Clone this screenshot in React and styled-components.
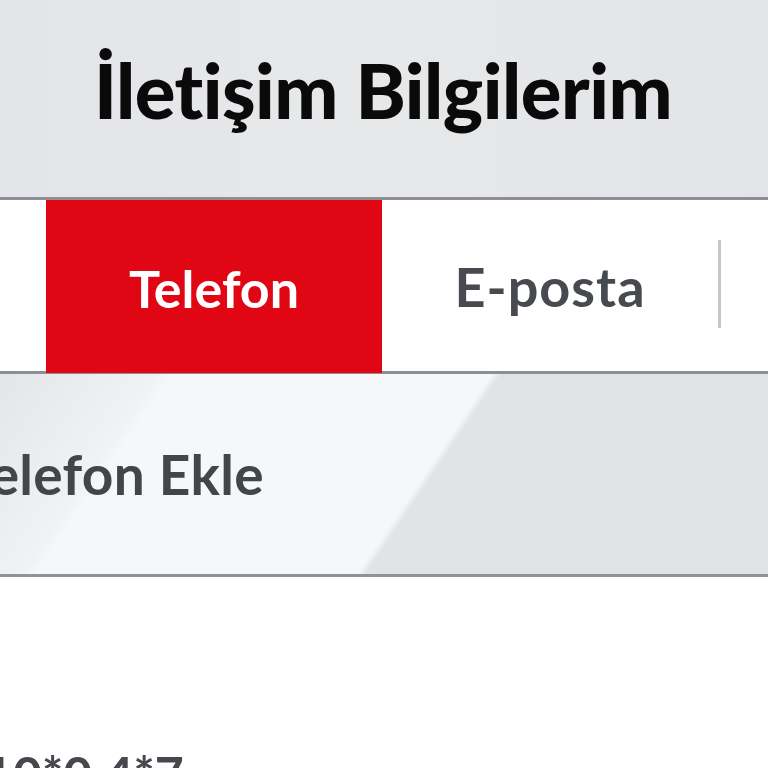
import React from "react";
import styled, { createGlobalStyle } from "styled-components";

const Global = createGlobalStyle`
  html, body {
    margin: 0;
    padding: 0;
    background: #fff;
    overflow: hidden;
  }
  body {
    font-family: Lato, "Open Sans", sans-serif;
  }
`;

const Page = styled.div`
  width: 768px;
  height: 768px;
  overflow: hidden;
  display: flex;
  flex-direction: column;
  background: #fff;
`;

const Header = styled.header`
  height: 197px;
  flex-shrink: 0;
  background: linear-gradient(90deg, #e3e5e8 0%, #e6e8ea 50%, #e2e4e7 100%);
  display: flex;
  align-items: center;
  justify-content: center;
`;

const Title = styled.h1`
  margin: 0;
  padding-bottom: 18px;
  padding-right: 2px;
  font-family: Lato, sans-serif;
  font-weight: 900;
  font-size: 76px;
  letter-spacing: -0.5px;
  color: #0a0a0a;
`;

const TabBar = styled.nav`
  height: 171px;
  flex-shrink: 0;
  border-top: 3px solid #8c8f93;
  border-bottom: 3px solid #8c8f93;
  background: #fff;
  display: flex;
  align-items: stretch;
  padding-left: 46px;
`;

const Tab = styled.div`
  width: 336px;
  display: flex;
  align-items: center;
  justify-content: center;
  padding-top: 2px;
  font-family: Lato, sans-serif;
  font-weight: 700;
  font-size: ${p => (p.$active ? "52px" : "54px")};
  letter-spacing: ${p => (p.$active ? "0" : "1px")};
  background: ${p => (p.$active ? "#e10613" : "transparent")};
  color: ${p => (p.$active ? "#fff" : "#474a4e")};
  margin-bottom: ${p => (p.$active ? "-2px" : "0")};
`;

const Divider = styled.span`
  align-self: center;
  width: 3px;
  height: 88px;
  margin-top: -4px;
  background: #c4c6c9;
`;

const AddSection = styled.section`
  height: 200px;
  flex-shrink: 0;
  border-bottom: 3px solid #8f9296;
  background: linear-gradient(
    124deg,
    #e3e5e8 0%,
    #eceef0 12%,
    #f1f2f4 17.5%,
    #f6f7f8 19%,
    #f6f7f8 54.5%,
    #e1e3e6 55.5%,
    #e1e3e6 100%
  );
  display: flex;
  align-items: center;
  overflow: hidden;
`;

const AddLabel = styled.div`
  margin-left: -37px;
  font-family: Lato, sans-serif;
  font-weight: 700;
  font-size: 55px;
  letter-spacing: 0.3px;
  color: #424549;
  white-space: nowrap;
`;

const NumberList = styled.div`
  flex: 1;
  display: flex;
  flex-direction: column;
  padding-top: 172px;
  overflow: hidden;
`;

const NumberRow = styled.div`
  margin-left: -16px;
  font-family: Lato, sans-serif;
  font-weight: 700;
  font-size: 50px;
  line-height: 50px;
  color: #45484c;
  white-space: nowrap;
`;

export default function App() {
  return (
    <Page>
      <Global />
      <Header>
        <Title>İletişim Bilgilerim</Title>
      </Header>
      <TabBar>
        <Tab $active>Telefon</Tab>
        <Tab>E-posta</Tab>
        <Divider />
      </TabBar>
      <AddSection>
        <AddLabel>Telefon Ekle</AddLabel>
      </AddSection>
      <NumberList>
        <NumberRow>10*0 4*7</NumberRow>
      </NumberList>
    </Page>
  );
}
